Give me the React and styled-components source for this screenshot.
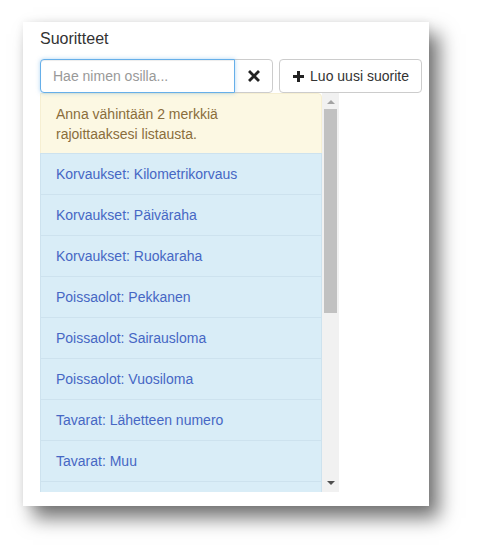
import React from 'react'
import styled, { createGlobalStyle } from 'styled-components'

const GlobalStyle = createGlobalStyle`
  body {
    margin: 0;
    background: #fff;
    font-family: "Liberation Sans", Arial, sans-serif;
  }
`;

const Page = styled.div`
  padding: 22px 0 0 23px;
  height: 555px;
  box-sizing: border-box;
`;

const Card = styled.div`
  width: 406px;
  height: 484px;
  box-sizing: border-box;
  padding: 7px 7px 0 17px;
  background: #fff;
  box-shadow: 10px 12px 18px rgba(0, 0, 0, 0.55), 0 0 8px rgba(0, 0, 0, 0.07);
`;

const Label = styled.div`
  font-size: 16px;
  line-height: 20px;
  color: #333;
  margin-bottom: 10px;
`;

const Toolbar = styled.div`
  display: flex;
  align-items: stretch;
  height: 34px;
`;

const SearchInput = styled.input`
  width: 195px;
  box-sizing: border-box;
  height: 34px;
  padding: 6px 12px;
  font-family: inherit;
  font-size: 14px;
  color: #555;
  border: 1px solid #66afe9;
  border-radius: 4px 0 0 4px;
  outline: none;
  box-shadow: inset 0 1px 1px rgba(0, 0, 0, 0.075), 0 0 4px rgba(102, 175, 233, 0.5);
  position: relative;
  z-index: 2;

  &::placeholder {
    color: #999;
  }
`;

const Button = styled.button`
  display: flex;
  align-items: center;
  justify-content: center;
  gap: 5px;
  box-sizing: border-box;
  height: 34px;
  width: ${({ width }) => width}px;
  margin-left: ${({ offset }) => offset}px;
  padding: 0 10px;
  background: #fff;
  border: 1px solid #ccc;
  border-radius: ${({ joined }) => joined ? '0 4px 4px 0' : '4px'};
  font-family: inherit;
  font-size: 14px;
  color: #333;
`;

const Dropdown = styled.div`
  display: flex;
  width: 299px;
  height: 399px;
  overflow: hidden;
`;

const List = styled.ul`
  list-style: none;
  margin: 0;
  padding: 0;
  width: 282px;
  flex: none;
`;

const Item = styled.li`
  box-sizing: border-box;
  padding: ${({ warning }) => warning ? '10px 70px 10px 15px' : '10px 15px'};
  font-size: 14px;
  line-height: 20px;
  border: 1px solid ${({ warning }) => warning ? '#f6efd2' : '#cde2ee'};
  margin-bottom: -1px;
  background: ${({ warning }) => warning ? '#fcf8e3' : '#d9edf7'};
  color: ${({ warning }) => warning ? '#8a6d3b' : '#4667c4'};
  height: ${({ warning }) => warning ? 61 : 42}px;

  &:first-child {
    border-top-right-radius: 4px;
  }
`;

const Scrollbar = styled.div`
  width: 17px;
  flex: none;
  background: #f1f1f1;
  display: flex;
  flex-direction: column;
  align-items: center;
`;

const Arrow = styled.div`
  width: 0;
  height: 0;
  border-left: 4px solid transparent;
  border-right: 4px solid transparent;
  ${({ down, color }) => down
    ? `border-top: 4px solid ${color};`
    : `border-bottom: 4px solid ${color};`}
  margin: ${({ down }) => down ? 'auto 0 7px' : '7px 0 0'};
`;

const Thumb = styled.div`
  width: 13px;
  height: 204px;
  margin-top: 5px;
  background: #c1c1c1;
`;

const RemoveIcon = () => (
  <svg width="12" height="12" viewBox="0 0 12 12">
    <path d="M2 2 L10 10 M10 2 L2 10" stroke="#222" strokeWidth="2.8" strokeLinecap="square" />
  </svg>
)

const PlusIcon = () => (
  <svg width="13" height="13" viewBox="0 0 13 13">
    <path d="M6.5 1 V12 M1 6.5 H12" stroke="#222" strokeWidth="3" />
  </svg>
)

const items = [
  'Korvaukset: Kilometrikorvaus',
  'Korvaukset: Päiväraha',
  'Korvaukset: Ruokaraha',
  'Poissaolot: Pekkanen',
  'Poissaolot: Sairausloma',
  'Poissaolot: Vuosiloma',
  'Tavarat: Lähetteen numero',
  'Tavarat: Muu',
]

const App = () => {
  return (
    <Page>
      <GlobalStyle />
      <Card>
        <Label>Suoritteet</Label>
        <Toolbar>
          <SearchInput placeholder="Hae nimen osilla..." />
          <Button width={39} offset={-1} joined>
            <RemoveIcon />
          </Button>
          <Button width={143} offset={6}>
            <PlusIcon />
            Luo uusi suorite
          </Button>
        </Toolbar>
        <Dropdown>
          <List>
            <Item warning>Anna vähintään 2 merkkiä rajoittaaksesi listausta.</Item>
            {items.map(name => <Item key={name}>{name}</Item>)}
            {/* next row, scrolled out of view */}
            <Item />
          </List>
          <Scrollbar>
            <Arrow color="#a3a3a3" />
            <Thumb />
            <Arrow down color="#505050" />
          </Scrollbar>
        </Dropdown>
      </Card>
    </Page>
  )
}

export default App
